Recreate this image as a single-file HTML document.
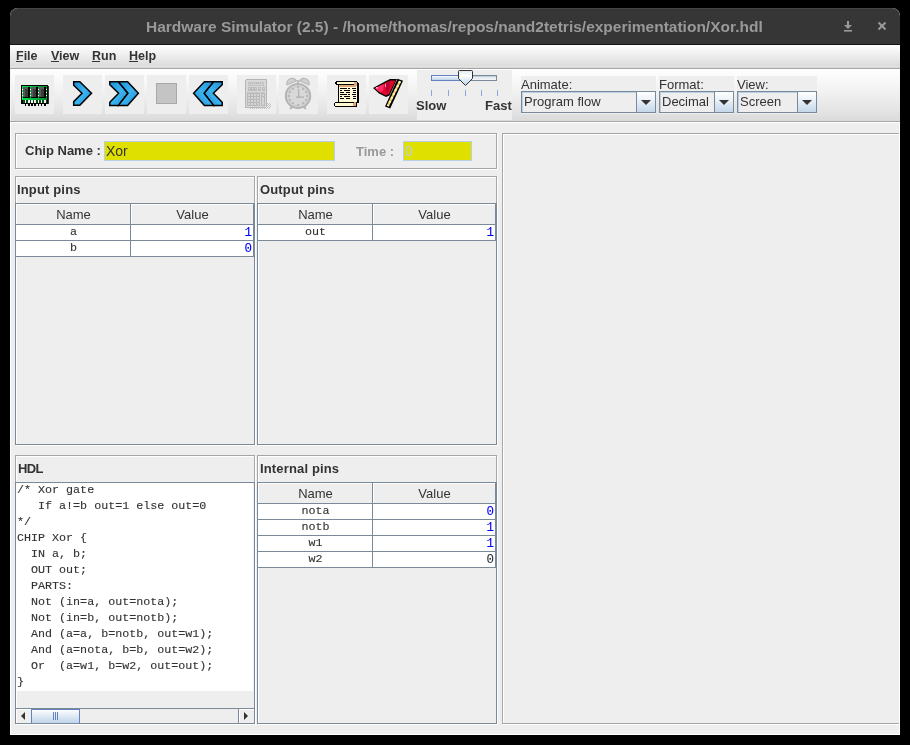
<!DOCTYPE html>
<html><head><meta charset="utf-8">
<style>
*{margin:0;padding:0;box-sizing:border-box}
html,body{width:910px;height:745px;overflow:hidden;background:#000}
body{position:relative;font-family:"Liberation Sans",sans-serif;color:#333}
.a{position:absolute}
svg{position:absolute;overflow:visible}
.t{white-space:nowrap;line-height:1;will-change:transform}
#win{left:10px;top:8px;width:890px;height:727px;background:#fff;border-radius:8px 8px 0 0;overflow:hidden}
#content{left:11px;top:123px;width:888px;height:611px;background:#eeeeee}
#title{left:10px;top:8px;width:890px;height:36px;background:#363636;border-radius:8px 8px 0 0;border-top:1px solid #454545}
#tline{left:10px;top:44px;width:890px;height:1px;background:#161616}
#ttext{left:146px;top:18.5px;font-weight:bold;font-size:15.5px;color:#999}
#menu{left:10px;top:45px;width:890px;height:23px;background:linear-gradient(#ffffff,#dcdcdc 90%,#e6e6e6 92%,#d4d4d4)}
#mline{left:10px;top:68px;width:890px;height:1px;background:#a6a6a6}
.mi{top:50px;font-size:12.5px;font-weight:bold;color:#333}
.ul{height:1px;background:#333;top:61px}
#tb{left:10px;top:69px;width:890px;height:52px;background:linear-gradient(#ffffff 0%,#f6f6f6 30%,#e4e4e4 80%,#dadada 100%);border-left:1px solid #f4f4f4}
#tbline{left:10px;top:121px;width:890px;height:1px;background:#a6a6a6}
#tbline2{left:10px;top:122px;width:890px;height:1px;background:#fff}
.btn{top:75px;width:39px;height:39px;background:#eeeeee}
.panel{background:#eeeeee}
.etch{border:1px solid #a6a6a6;box-shadow:1px 1px 0 #fff, inset 1px 1px 0 #fff}
.lbl{font-size:13px;font-weight:bold;color:#333;letter-spacing:0.15px}
.field{background:#e0e000;border:1px solid #b8cfe5}
.combo{height:22px;border:1px solid #7a8a99;background:#eeeeee;box-shadow:inset 1px 1px 0 #b8cfe5}
.carrow{top:-1px;width:20px;height:22px;border:1px solid #7a8a99;background:linear-gradient(#ffffff,#eaf1f8 40%,#c4d7ea)}
.carrow:after{content:"";position:absolute;left:4px;top:8px;border-left:5.5px solid transparent;border-right:5.5px solid transparent;border-top:5.5px solid #333}
.ctext{font-size:13px;color:#333}
.gl{background:#7a8a99}
.hdr{background:#eeeeee}
.mono{font-family:"Liberation Mono",monospace}
.cell{font-family:"Liberation Mono",monospace;font-size:11.7px;color:#333;text-align:center;-webkit-text-stroke:0.12px #333}
.val{font-family:"Liberation Mono",monospace;font-size:12.5px;color:#0000ff;text-align:right;-webkit-text-stroke:0.1px currentColor}
.htxt{font-size:13px;color:#333;text-align:center}
#hdl{left:17px;top:482px;will-change:transform;-webkit-text-stroke:0.12px #333;font-family:"Liberation Mono",monospace;font-size:11.7px;line-height:16px;color:#333;white-space:pre}
</style></head><body>
<div id="win" class="a"></div>
<div id="content" class="a"></div>
<div id="title" class="a"></div>
<div id="tline" class="a"></div>
<div id="ttext" class="a t">Hardware Simulator (2.5) - /home/thomas/repos/nand2tetris/experimentation/Xor.hdl</div>
<!-- window controls -->
<svg style="left:0;top:0" width="910" height="50">
  <g fill="#9a9a9a">
    <rect x="847" y="21" width="2" height="6"/>
    <polygon points="844,25 852,25 848,29"/>
    <rect x="844" y="30" width="8" height="1.6"/>
  </g>
  <g stroke="#9a9a9a" stroke-width="1.9">
    <line x1="878.5" y1="22.5" x2="885.5" y2="29.5"/>
    <line x1="885.5" y1="22.5" x2="878.5" y2="29.5"/>
  </g>
</svg>
<div id="menu" class="a"></div>
<div id="mline" class="a"></div>
<div class="a mi t" style="left:16px">File</div>
<div class="a mi t" style="left:51px">View</div>
<div class="a mi t" style="left:92px">Run</div>
<div class="a mi t" style="left:129px">Help</div>
<div class="a ul" style="left:16px;width:7px"></div>
<div class="a ul" style="left:51px;width:8px"></div>
<div class="a ul" style="left:92px;width:8px"></div>
<div class="a ul" style="left:129px;width:9px"></div>
<div id="tb" class="a"></div>
<div id="tbline" class="a"></div>
<div id="tbline2" class="a"></div>
<div class="a btn" style="left:15px"></div>
<div class="a btn" style="left:63px"></div>
<div class="a btn" style="left:105px"></div>
<div class="a btn" style="left:147px"></div>
<div class="a btn" style="left:189px"></div>
<div class="a btn" style="left:237px"></div>
<div class="a btn" style="left:279px"></div>
<div class="a btn" style="left:327px"></div>
<div class="a btn" style="left:369px"></div>
<!-- slider panel -->
<div class="a panel" style="left:417px;top:70px;width:95px;height:50px"></div>
<div class="a panel" style="left:521px;top:76px;width:135px;height:38px"></div>
<div class="a panel" style="left:659px;top:76px;width:75px;height:38px"></div>
<div class="a panel" style="left:737px;top:76px;width:80px;height:38px"></div>


<!-- toolbar icons -->
<svg style="left:0;top:0" width="910" height="130">
 <defs>
  <linearGradient id="gb" x1="0" y1="0" x2="1" y2="1">
   <stop offset="0" stop-color="#1f8fd6"/><stop offset="0.5" stop-color="#3cb4f0"/><stop offset="1" stop-color="#1e8ad0"/>
  </linearGradient>
  <linearGradient id="gg" x1="0" y1="0" x2="1" y2="0">
   <stop offset="0" stop-color="#00e64d"/><stop offset="1" stop-color="#008a30"/>
  </linearGradient>
  <linearGradient id="gth" x1="0" y1="0" x2="0" y2="1">
   <stop offset="0" stop-color="#dce8f4"/><stop offset="0.35" stop-color="#ffffff"/><stop offset="1" stop-color="#b8d0ea"/>
  </linearGradient>
  <linearGradient id="gtrr" x1="0" y1="0" x2="0" y2="1"><stop offset="0" stop-color="#9fb0c2"/><stop offset="0.4" stop-color="#e6ebf0"/><stop offset="1" stop-color="#f6f6f6"/></linearGradient>
  <linearGradient id="gtr" x1="0" y1="0" x2="0" y2="1">
   <stop offset="0" stop-color="#fbfcfe"/><stop offset="1" stop-color="#b8cfe5"/>
  </linearGradient>
 </defs>
 <!-- chip -->
 <g shape-rendering="crispEdges">
  <rect x="21" y="85" width="27" height="19" fill="#000"/>
  <rect x="48" y="86" width="1" height="18" fill="#333"/>
  <rect x="22" y="86" width="25" height="14" fill="url(#gg)"/>
  <rect x="23" y="100" width="24" height="3" fill="#004d14"/>
  <g fill="#000">
   <rect x="23" y="87" width="7" height="11"/><rect x="31" y="87" width="7" height="11"/><rect x="39" y="87" width="7" height="11"/>
  </g>
  <g fill="#5a5a5a">
   <rect x="23" y="87" width="5" height="10"/><rect x="31" y="87" width="5" height="10"/><rect x="39" y="87" width="5" height="10"/>
  </g>
  <g fill="#3c3c3c">
   <rect x="25" y="89" width="3" height="8"/><rect x="33" y="89" width="3" height="8"/><rect x="41" y="89" width="3" height="8"/>
  </g>
  <g fill="#fff">
   <rect x="22" y="89" width="1" height="1"/><rect x="22" y="92" width="1" height="1"/><rect x="22" y="95" width="1" height="1"/>
   <rect x="30" y="89" width="1" height="1"/><rect x="30" y="92" width="1" height="1"/><rect x="30" y="95" width="1" height="1"/>
   <rect x="38" y="89" width="1" height="1"/><rect x="38" y="92" width="1" height="1"/><rect x="38" y="95" width="1" height="1"/>
   <rect x="46" y="89" width="1" height="1"/><rect x="46" y="92" width="1" height="1"/><rect x="46" y="95" width="1" height="1"/>
  </g>
  <g fill="#fcecf6">
   <rect x="25" y="100" width="1" height="3"/><rect x="28" y="100" width="2" height="3"/><rect x="31" y="100" width="2" height="3"/>
   <rect x="34" y="100" width="2" height="3"/><rect x="38" y="100" width="1" height="3"/><rect x="41" y="100" width="1" height="3"/><rect x="44" y="100" width="2" height="3"/>
  </g>
  <g fill="#000">
   <rect x="25" y="104" width="1" height="2"/><rect x="28" y="104" width="2" height="2"/><rect x="31" y="104" width="2" height="2"/>
   <rect x="34" y="104" width="2" height="2"/><rect x="38" y="104" width="1" height="2"/><rect x="41" y="104" width="1" height="2"/><rect x="44" y="104" width="2" height="2"/>
  </g>
 </g>
 <!-- play -->
 <polygon points="73.7,81.7 79.8,81.7 91.5,93.3 79.8,105.3 73.7,105.3 73.7,101.6 82,93.3 73.7,85.2" fill="url(#gb)" stroke="#000" stroke-width="1.5" stroke-linejoin="miter"/>
 <!-- fast forward -->
 <polygon points="109.8,81.8 118.4,81.8 128,93.3 118.4,105.4 109.8,105.4 109.8,102.2 118.6,93.3 109.8,84.8" fill="url(#gb)" stroke="#000" stroke-width="1.5"/>
 <polygon points="118.4,81.8 127.6,81.8 138.4,93.3 127.6,105.4 118.4,105.4 128,93.3" fill="url(#gb)" stroke="#000" stroke-width="1.5"/>
 <!-- stop -->
 <rect x="156.5" y="83.5" width="20" height="20" fill="#c4c4c4" stroke="#a8a8a8" stroke-width="1"/>
 <!-- rewind -->
 <g transform="translate(332,0) scale(-1,1)">
 <polygon points="109.8,81.8 118.4,81.8 128,93.3 118.4,105.4 109.8,105.4 109.8,102.2 118.6,93.3 109.8,84.8" fill="url(#gb)" stroke="#000" stroke-width="1.5"/>
 <polygon points="118.4,81.8 127.6,81.8 138.4,93.3 127.6,105.4 118.4,105.4 128,93.3" fill="url(#gb)" stroke="#000" stroke-width="1.5"/>
 </g>
 <!-- calculator (disabled) -->
 <g shape-rendering="crispEdges">
  <rect x="245" y="79" width="22" height="29" rx="2" fill="#b6b6b6"/>
  <rect x="246" y="80" width="20" height="27" rx="1" fill="#d8d8d8"/>
  <rect x="248" y="82" width="16" height="4" fill="#c2c2c2"/>
  <rect x="249" y="83" width="14" height="2" fill="#d2d2d2"/>
  <g fill="#b4b4b4"><rect x="250" y="83" width="1" height="1"/><rect x="252" y="83" width="1" height="1"/><rect x="254" y="83" width="1" height="1"/><rect x="256" y="83" width="1" height="1"/><rect x="258" y="83" width="1" height="1"/><rect x="260" y="83" width="1" height="1"/></g>
  <rect x="248" y="87" width="9" height="4" fill="#bdbdbd"/>
  <rect x="258" y="87" width="3" height="4" fill="#bdbdbd"/>
  <rect x="262" y="87" width="3" height="4" fill="#bdbdbd"/>
  <g fill="#d8d8d8"><rect x="249" y="88" width="1" height="1"/><rect x="252" y="88" width="1" height="1"/><rect x="255" y="88" width="1" height="1"/><rect x="259" y="88" width="1" height="1"/><rect x="263" y="88" width="1" height="1"/></g>
  <rect x="247" y="92" width="18" height="1" fill="#c8c8c8"/>
  <rect x="247" y="93" width="13" height="13" fill="#b8b8b8"/>
  <rect x="261" y="93" width="4" height="13" fill="#b8b8b8"/>
  <g fill="#d4d4d4"><rect x="248" y="94" width="2" height="2"/><rect x="248" y="97" width="2" height="2"/><rect x="248" y="100" width="2" height="2"/><rect x="248" y="103" width="2" height="2"/><rect x="251" y="94" width="2" height="2"/><rect x="251" y="97" width="2" height="2"/><rect x="251" y="100" width="2" height="2"/><rect x="251" y="103" width="2" height="2"/><rect x="254" y="94" width="2" height="2"/><rect x="254" y="97" width="2" height="2"/><rect x="254" y="100" width="2" height="2"/><rect x="254" y="103" width="2" height="2"/><rect x="257" y="94" width="2" height="2"/><rect x="257" y="97" width="2" height="2"/><rect x="257" y="100" width="2" height="2"/><rect x="257" y="103" width="2" height="2"/><rect x="262" y="94" width="2" height="2"/><rect x="262" y="97" width="2" height="8"/></g>
  <g fill="#c4c4c4">
   <rect x="267" y="103" width="1" height="1"/><rect x="269" y="103" width="1" height="1"/><rect x="268" y="104" width="1" height="1"/><rect x="270" y="104" width="1" height="1"/>
   <rect x="267" y="105" width="1" height="1"/><rect x="269" y="105" width="1" height="1"/><rect x="268" y="106" width="1" height="1"/><rect x="270" y="106" width="1" height="1"/>
   <rect x="267" y="107" width="1" height="1"/><rect x="269" y="107" width="1" height="1"/><rect x="264" y="108" width="1" height="1"/><rect x="266" y="108" width="1" height="1"/><rect x="268" y="108" width="1" height="1"/>
   <rect x="250" y="108" width="1" height="1"/><rect x="252" y="108" width="1" height="1"/><rect x="254" y="108" width="1" height="1"/><rect x="256" y="108" width="1" height="1"/><rect x="258" y="108" width="1" height="1"/><rect x="260" y="108" width="1" height="1"/><rect x="262" y="108" width="1" height="1"/>
  </g>
 </g>
 <!-- clock (disabled) -->
 <g>
  <path d="M287,85 Q286,80 291,78.5 Q295,78 296,81 Z" fill="#d0d0d0" stroke="#b8b8b8" stroke-width="1.2"/>
  <path d="M309,85 Q310,80 305,78.5 Q301,78 300,81 Z" fill="#d0d0d0" stroke="#b8b8b8" stroke-width="1.2"/>
  <rect x="297" y="80" width="2" height="4" fill="#b8b8b8"/>
  <rect x="294" y="80" width="8" height="1.5" fill="#c0c0c0"/>
  <line x1="290" y1="109" x2="293" y2="106" stroke="#b8b8b8" stroke-width="2"/>
  <line x1="306" y1="109" x2="303" y2="106" stroke="#b8b8b8" stroke-width="2"/>
  <ellipse cx="298" cy="96" rx="12.2" ry="12" fill="#d8d8d8" stroke="#b4b4b4" stroke-width="2"/>
  <ellipse cx="298" cy="96" rx="10" ry="10" fill="none" stroke="#c8c8c8" stroke-width="1"/>
  <g fill="#b8b8b8">
   <rect x="297" y="86" width="2" height="2"/><rect x="297" y="104" width="2" height="2"/>
   <rect x="288" y="95" width="2" height="2"/><rect x="306" y="95" width="2" height="2"/>
   <rect x="292" y="88" width="2" height="2"/><rect x="302" y="88" width="2" height="2"/>
   <rect x="292" y="102" width="2" height="2"/><rect x="302" y="102" width="2" height="2"/>
   <rect x="289" y="91" width="2" height="2"/><rect x="305" y="91" width="2" height="2"/>
   <rect x="289" y="99" width="2" height="2"/><rect x="305" y="99" width="2" height="2"/>
  </g>
  <rect x="298" y="89" width="1.2" height="9" fill="#b0b0b0"/>
  <rect x="296" y="96.5" width="8" height="1.2" fill="#b0b0b0"/>
 </g>
 <!-- scroll -->
 <g shape-rendering="crispEdges">
  <rect x="338" y="84" width="20" height="19" fill="#000"/>
  <rect x="339" y="85" width="18" height="17" fill="#fffbd6"/>
  <rect x="339" y="85" width="17" height="2" fill="#e0a878"/>
  <rect x="336" y="81" width="21" height="4" fill="#000"/>
  <rect x="335" y="82" width="1" height="2" fill="#000"/>
  <rect x="337" y="82" width="17" height="2" fill="#fffad0"/>
  <rect x="354" y="82" width="3" height="4" fill="#e0a878"/>
  <rect x="357" y="82" width="1" height="4" fill="#000"/>
  <rect x="358" y="83" width="1" height="20" fill="#000"/>
  <rect x="335" y="102" width="22" height="5" fill="#000"/>
  <rect x="334" y="103" width="1" height="3" fill="#000"/>
  <rect x="335" y="103" width="18" height="3" fill="#fffad0"/>
  <rect x="353" y="103" width="3" height="3" fill="#e0a878"/>
  <rect x="354" y="102" width="2" height="1" fill="#e0a878"/>
  <g fill="#000">
   <rect x="340" y="88" width="7" height="1"/><rect x="348" y="88" width="2" height="1"/><rect x="352" y="88" width="4" height="1"/>
   <rect x="340" y="90" width="2" height="1"/><rect x="344" y="90" width="6" height="1"/><rect x="353" y="90" width="3" height="1"/>
   <rect x="340" y="92" width="4" height="1"/><rect x="346" y="92" width="4" height="1"/><rect x="353" y="92" width="3" height="1"/>
   <rect x="340" y="94" width="7" height="1"/><rect x="348" y="94" width="2" height="1"/><rect x="352" y="94" width="4" height="1"/>
   <rect x="340" y="96" width="2" height="1"/><rect x="344" y="96" width="6" height="1"/><rect x="353" y="96" width="3" height="1"/>
   <rect x="340" y="98" width="4" height="1"/><rect x="346" y="98" width="4" height="1"/><rect x="353" y="98" width="3" height="1"/>
  </g>
 </g>
 <!-- flag -->
 <g>
  <polygon points="373,88 385,81.5 390,79 397,79 389.5,95.5 386,97 379,93.5" fill="#000"/>
  <polygon points="375,88.2 385.5,82.8 390.5,80.6 395.5,80.6 389,94 386,95.4 379.5,92.2" fill="#e0082a"/>
  <polygon points="375,88.2 381,85.2 384,84.5 383,91 379.5,92.2" fill="#ff2a66"/>
  <rect x="376" y="87" width="2" height="1.5" fill="#ff9ec0"/>
  <rect x="385" y="84" width="2" height="3" fill="#ff9ec0"/>
  <polygon points="386,84 390,81.5 389,90 386,93" fill="#b00032"/>
  <polygon points="397.5,78.8 403,80.8 390.2,108.6 385,106.6" fill="#000"/>
  <line x1="400" y1="81.2" x2="387.8" y2="106" stroke="#f2d060" stroke-width="2.2"/>
  <line x1="400" y1="81.2" x2="387.8" y2="106" stroke="#fff4c8" stroke-width="2.2" stroke-dasharray="2 2.4"/>
 </g>
 <!-- slider -->
 <g shape-rendering="crispEdges">
  <rect x="431.5" y="75.5" width="65" height="5" fill="url(#gtrr)" stroke="#7a8a99"/>
  <rect x="431.5" y="75.5" width="28" height="5" fill="url(#gtr)" stroke="#6382bf"/>
  <g fill="#8aa8d8">
   <rect x="431" y="90" width="1" height="6"/><rect x="448" y="90" width="1" height="6"/><rect x="465" y="90" width="1" height="6"/>
   <rect x="481" y="90" width="1" height="6"/><rect x="497" y="90" width="1" height="6"/>
  </g>
 </g>
 <path d="M458.5,71.5 Q458.5,70.5 459.5,70.5 L471.5,70.5 Q472.5,70.5 472.5,71.5 L472.5,78.5 L465.5,85.5 L458.5,78.5 Z" fill="url(#gth)" stroke="#333" stroke-width="1"/>
</svg>
<div class="a t" style="left:416px;top:99px;font-size:13px;font-weight:bold;color:#333">Slow</div>
<div class="a t" style="left:485px;top:99px;font-size:13px;font-weight:bold;color:#333">Fast</div>

<div class="a t ctext" style="left:521px;top:78px">Animate:</div>
<div class="a combo" style="left:521px;top:91px;width:135px"><div class="a carrow" style="left:114px"></div></div>
<div class="a t ctext" style="left:524px;top:95px">Program flow</div>
<div class="a t ctext" style="left:659px;top:78px">Format:</div>
<div class="a combo" style="left:659px;top:91px;width:75px"><div class="a carrow" style="left:54px"></div></div>
<div class="a t ctext" style="left:662px;top:95px">Decimal</div>
<div class="a t ctext" style="left:737px;top:78px">View:</div>
<div class="a combo" style="left:737px;top:91px;width:80px"><div class="a carrow" style="left:59px"></div></div>
<div class="a t ctext" style="left:740px;top:95px">Screen</div>

<!-- chip name box -->
<div class="a etch" style="left:15px;top:133px;width:482px;height:36px"></div>
<div class="a t lbl" style="left:25px;top:144px;letter-spacing:0">Chip Name :</div>
<div class="a field" style="left:104px;top:141px;width:231px;height:20px"></div>
<div class="a t ctext" style="left:106px;top:144px;font-size:14px">Xor</div>
<div class="a t lbl" style="left:356px;top:145px;color:#999;letter-spacing:0">Time :</div>
<div class="a field" style="left:403px;top:141px;width:69px;height:20px"></div>
<div class="a t ctext" style="left:405px;top:144px;font-size:14px;color:#b8cfe5">0</div>

<!-- right panel -->
<div class="a etch" style="left:502px;top:133px;width:400px;height:591px;clip-path:inset(-2px 3px -2px -2px)"></div>

<!-- boxes -->
<div class="a etch" style="left:15px;top:176px;width:240px;height:269px"></div>
<div class="a etch" style="left:257px;top:176px;width:240px;height:269px"></div>
<div class="a etch" style="left:15px;top:455px;width:240px;height:269px"></div>
<div class="a etch" style="left:257px;top:455px;width:240px;height:269px"></div>
<div class="a t lbl" style="left:17px;top:183px">Input pins</div>
<div class="a t lbl" style="left:260px;top:183px">Output pins</div>
<div class="a t lbl" style="left:18px;top:462px;letter-spacing:-0.6px">HDL</div>
<div class="a t lbl" style="left:260px;top:462px">Internal pins</div>

<!-- input pins table -->
<div class="a" style="left:15px;top:203px;width:240px;height:242px;border:1px solid #7a8a99;box-shadow:1px 1px 0 #fff"></div>
<div class="a" style="left:16px;top:225px;width:237px;height:32px;background:#fff"></div>
<div class="a hdr" style="left:16px;top:204px;width:115px;height:21px;border-right:1px solid #7a8a99;border-bottom:1px solid #7a8a99;box-shadow:inset 1px 1px 0 #fff"></div>
<div class="a hdr" style="left:131px;top:204px;width:123px;height:21px;border-right:1px solid #7a8a99;border-bottom:1px solid #7a8a99;box-shadow:inset 1px 1px 0 #fff"></div>
<div class="a gl" style="left:16px;top:240px;width:238px;height:1px"></div>
<div class="a gl" style="left:16px;top:256px;width:238px;height:1px"></div>
<div class="a gl" style="left:130px;top:225px;width:1px;height:32px"></div>
<div class="a gl" style="left:253px;top:225px;width:1px;height:32px"></div>
<div class="a t htxt" style="left:16px;top:208px;width:115px">Name</div>
<div class="a t htxt" style="left:131px;top:208px;width:123px">Value</div>
<div class="a t cell" style="left:16px;top:227px;width:115px">a</div>
<div class="a t cell" style="left:16px;top:243px;width:115px">b</div>
<div class="a t val" style="left:131px;top:227px;width:121px">1</div>
<div class="a t val" style="left:131px;top:243px;width:121px">0</div>

<!-- output pins table -->
<div class="a" style="left:257px;top:203px;width:240px;height:242px;border:1px solid #7a8a99;box-shadow:1px 1px 0 #fff"></div>
<div class="a" style="left:258px;top:225px;width:237px;height:16px;background:#fff"></div>
<div class="a hdr" style="left:258px;top:204px;width:115px;height:21px;border-right:1px solid #7a8a99;border-bottom:1px solid #7a8a99;box-shadow:inset 1px 1px 0 #fff"></div>
<div class="a hdr" style="left:373px;top:204px;width:123px;height:21px;border-right:1px solid #7a8a99;border-bottom:1px solid #7a8a99;box-shadow:inset 1px 1px 0 #fff"></div>
<div class="a gl" style="left:258px;top:240px;width:238px;height:1px"></div>
<div class="a gl" style="left:372px;top:225px;width:1px;height:16px"></div>
<div class="a gl" style="left:495px;top:225px;width:1px;height:16px"></div>
<div class="a t htxt" style="left:258px;top:208px;width:115px">Name</div>
<div class="a t htxt" style="left:373px;top:208px;width:123px">Value</div>
<div class="a t cell" style="left:258px;top:227px;width:115px">out</div>
<div class="a t val" style="left:373px;top:227px;width:121px">1</div>

<!-- internal pins table -->
<div class="a" style="left:257px;top:482px;width:240px;height:242px;border:1px solid #7a8a99;box-shadow:1px 1px 0 #fff"></div>
<div class="a" style="left:258px;top:504px;width:237px;height:64px;background:#fff"></div>
<div class="a hdr" style="left:258px;top:483px;width:115px;height:21px;border-right:1px solid #7a8a99;border-bottom:1px solid #7a8a99;box-shadow:inset 1px 1px 0 #fff"></div>
<div class="a hdr" style="left:373px;top:483px;width:123px;height:21px;border-right:1px solid #7a8a99;border-bottom:1px solid #7a8a99;box-shadow:inset 1px 1px 0 #fff"></div>
<div class="a gl" style="left:258px;top:519px;width:238px;height:1px"></div>
<div class="a gl" style="left:258px;top:535px;width:238px;height:1px"></div>
<div class="a gl" style="left:258px;top:551px;width:238px;height:1px"></div>
<div class="a gl" style="left:258px;top:567px;width:238px;height:1px"></div>
<div class="a gl" style="left:372px;top:504px;width:1px;height:64px"></div>
<div class="a gl" style="left:495px;top:504px;width:1px;height:64px"></div>
<div class="a t htxt" style="left:258px;top:487px;width:115px">Name</div>
<div class="a t htxt" style="left:373px;top:487px;width:123px">Value</div>
<div class="a t cell" style="left:258px;top:506px;width:115px">nota</div>
<div class="a t cell" style="left:258px;top:522px;width:115px">notb</div>
<div class="a t cell" style="left:258px;top:538px;width:115px">w1</div>
<div class="a t cell" style="left:258px;top:554px;width:115px">w2</div>
<div class="a t val" style="left:373px;top:506px;width:121px">0</div>
<div class="a t val" style="left:373px;top:522px;width:121px">1</div>
<div class="a t val" style="left:373px;top:538px;width:121px">1</div>
<div class="a t val" style="left:373px;top:554px;width:121px;color:#333">0</div>

<!-- HDL text area -->
<div class="a" style="left:15px;top:482px;width:240px;height:242px;border:1px solid #7a8a99;box-shadow:1px 1px 0 #fff"></div>
<div class="a" style="left:16px;top:483px;width:237px;height:208px;background:#fff"></div>
<div id="hdl" class="a">/* Xor gate
   If a!=b out=1 else out=0
*/
CHIP Xor {
  IN a, b;
  OUT out;
  PARTS:
  Not (in=a, out=nota);
  Not (in=b, out=notb);
  And (a=a, b=notb, out=w1);
  And (a=nota, b=b, out=w2);
  Or  (a=w1, b=w2, out=out);
}</div>
<!-- h scrollbar -->
<div class="a gl" style="left:16px;top:708px;width:238px;height:1px"></div>
<div class="a" style="left:16px;top:709px;width:238px;height:14px;background:#eeeeee"></div>
<div class="a" style="left:16px;top:709px;width:15px;height:14px;background:#eeeeee;box-shadow:inset 1px 1px 0 #fff"></div>
<svg style="left:0;top:0" width="1" height="1"><polygon points="21,716 25,712 25,720" fill="#333"/></svg>
<div class="a" style="left:31px;top:709px;width:49px;height:14px;border:1px solid #6382bf;border-bottom:none;background:linear-gradient(#fdfdfe,#e3ecf6 40%,#c0d5ec)"></div>
<div class="a" style="left:53px;top:712px;width:1px;height:8px;background:#6382bf"></div>
<div class="a" style="left:55px;top:712px;width:1px;height:8px;background:#6382bf"></div>
<div class="a" style="left:57px;top:712px;width:1px;height:8px;background:#6382bf"></div>
<div class="a" style="left:238px;top:709px;width:16px;height:14px;background:#eeeeee;border-left:1px solid #7a8a99;box-shadow:inset 1px 1px 0 #fff"></div>
<svg style="left:0;top:0" width="1" height="1"><polygon points="248,716 244,712 244,720" fill="#333"/></svg>
</body></html>
